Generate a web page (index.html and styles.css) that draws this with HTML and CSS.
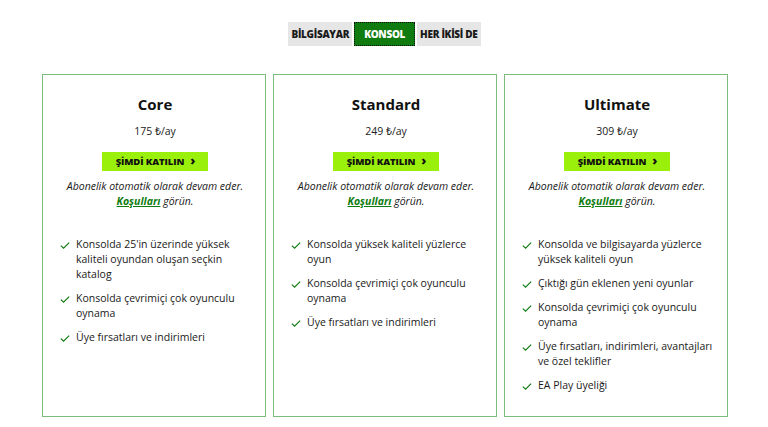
FILE: index.html
```html
<!DOCTYPE html>
<html lang="tr">
<head>
<meta charset="utf-8">
<link rel="stylesheet" href="styles.css">
</head>
<body>
<div class="page">
  <div class="toggle">
    <button class="tab">BİLGİSAYAR</button>
    <button class="tab active">KONSOL</button>
    <button class="tab">HER İKİSİ DE</button>
  </div>
  <div class="cards">
    <div class="card">
      <h2 class="title">Core</h2>
      <div class="price">175 ₺/ay</div>
      <a class="cta">ŞİMDİ KATILIN <span class="chev">›</span></a>
      <p class="note">Abonelik otomatik olarak devam eder.<br><a class="terms">Koşulları</a> görün.</p>
      <ul class="features">
        <li><svg class="check" viewBox="0 0 12 10"><path d="M1 5.2 L4.3 8.3 L11 1.6"/></svg><span>Konsolda 25'in üzerinde yüksek kaliteli oyundan oluşan seçkin katalog</span></li>
        <li><svg class="check" viewBox="0 0 12 10"><path d="M1 5.2 L4.3 8.3 L11 1.6"/></svg><span>Konsolda çevrimiçi çok oyunculu oynama</span></li>
        <li><svg class="check" viewBox="0 0 12 10"><path d="M1 5.2 L4.3 8.3 L11 1.6"/></svg><span>Üye fırsatları ve indirimleri</span></li>
      </ul>
    </div>
    <div class="card">
      <h2 class="title">Standard</h2>
      <div class="price">249 ₺/ay</div>
      <a class="cta">ŞİMDİ KATILIN <span class="chev">›</span></a>
      <p class="note">Abonelik otomatik olarak devam eder.<br><a class="terms">Koşulları</a> görün.</p>
      <ul class="features">
        <li><svg class="check" viewBox="0 0 12 10"><path d="M1 5.2 L4.3 8.3 L11 1.6"/></svg><span>Konsolda yüksek kaliteli yüzlerce oyun</span></li>
        <li><svg class="check" viewBox="0 0 12 10"><path d="M1 5.2 L4.3 8.3 L11 1.6"/></svg><span>Konsolda çevrimiçi çok oyunculu oynama</span></li>
        <li><svg class="check" viewBox="0 0 12 10"><path d="M1 5.2 L4.3 8.3 L11 1.6"/></svg><span>Üye fırsatları ve indirimleri</span></li>
      </ul>
    </div>
    <div class="card">
      <h2 class="title">Ultimate</h2>
      <div class="price">309 ₺/ay</div>
      <a class="cta">ŞİMDİ KATILIN <span class="chev">›</span></a>
      <p class="note">Abonelik otomatik olarak devam eder.<br><a class="terms">Koşulları</a> görün.</p>
      <ul class="features">
        <li><svg class="check" viewBox="0 0 12 10"><path d="M1 5.2 L4.3 8.3 L11 1.6"/></svg><span>Konsolda ve bilgisayarda yüzlerce yüksek kaliteli oyun</span></li>
        <li><svg class="check" viewBox="0 0 12 10"><path d="M1 5.2 L4.3 8.3 L11 1.6"/></svg><span>Çıktığı gün eklenen yeni oyunlar</span></li>
        <li><svg class="check" viewBox="0 0 12 10"><path d="M1 5.2 L4.3 8.3 L11 1.6"/></svg><span>Konsolda çevrimiçi çok oyunculu oynama</span></li>
        <li><svg class="check" viewBox="0 0 12 10"><path d="M1 5.2 L4.3 8.3 L11 1.6"/></svg><span>Üye fırsatları, indirimleri, avantajları ve özel teklifler</span></li>
        <li><svg class="check" viewBox="0 0 12 10"><path d="M1 5.2 L4.3 8.3 L11 1.6"/></svg><span>EA Play üyeliği</span></li>
      </ul>
    </div>
  </div>
</div>
</body>
</html>
```

FILE: styles.css
```css
* { box-sizing: border-box; }
html, body { margin: 0; padding: 0; background: #fff; }
body {
  font-family: "Open Sans", "Noto Sans", sans-serif;
  color: #1a1a1a;
  width: 768px;
  height: 427px;
  overflow: hidden;
}
.page {
  padding-top: 22px;
}
.toggle {
  display: flex;
  justify-content: center;
  gap: 2px;
  margin-left: 1px;
}
.tab {
  font-family: "Open Sans", sans-serif;
  font-weight: 800;
  font-size: 10px;
  letter-spacing: -0.3px;
  color: #1a1a1a;
  background: #e6e6e6;
  border: 0;
  height: 24px;
  padding: 0 3px;
  margin: 0;
}
.tab.active {
  background: #107c10;
  color: #fff;
  outline: 1px dotted #0a0a0a;
  outline-offset: -1px;
  border: 1px dotted #e6e6e6;
  padding: 0 9px;
}
.cards {
  display: flex;
  gap: 7px;
  margin-top: 28px;
  padding-left: 42px;
}
.card {
  width: 224px;
  height: 343px;
  border: 1px solid #7bbb7b;
  padding: 18px 14px 0 16px;
  display: flex;
  flex-direction: column;
  align-items: center;
}
.title {
  margin: 0;
  font-size: 15px;
  font-weight: 700;
  line-height: 22px;
  color: #111;
}
.price {
  font-size: 10.5px;
  margin-top: 8px;
  line-height: 16px;
  color: #222;
}
.cta {
  display: flex;
  align-items: center;
  gap: 6px;
  margin-top: 13px;
  background: #9bf00b;
  height: 19px;
  padding: 0 13px 0 14px;
  font-weight: 800;
  font-size: 9.5px;
  letter-spacing: -0.1px;
  color: #111;
}
.chev {
  font-size: 13px;
  font-weight: 800;
  line-height: 1;
  margin-top: -2px;
}
.note {
  margin: 8px 0 0;
  text-align: center;
  font-style: italic;
  font-size: 10.5px;
  line-height: 15px;
  color: #1a1a1a;
}
.terms {
  color: #107c10;
  font-weight: 700;
  text-decoration: underline;
}
.features {
  list-style: none;
  margin: 28px 0 0;
  padding: 0;
  align-self: stretch;
}
.features li {
  display: flex;
  align-items: flex-start;
  font-size: 10.5px;
  line-height: 15px;
  margin-bottom: 9px;
  color: #1a1a1a;
}
.check {
  flex: 0 0 auto;
  width: 10px;
  height: 9px;
  margin: 4px 6px 0 1px;
  fill: none;
  stroke: #107c10;
  stroke-width: 1.4;
}
```
